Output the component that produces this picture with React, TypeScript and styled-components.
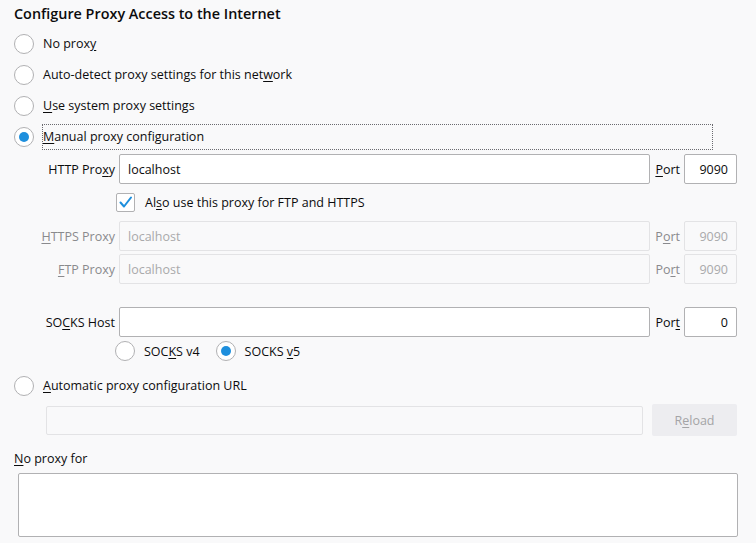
import React from "react";
import styled, { createGlobalStyle } from "styled-components";

const GlobalStyle = createGlobalStyle`
  html, body {
    margin: 0;
    padding: 0;
    background-color: #f9f9fa;
  }

  body {
    font-family: "Open Sans", "Noto Sans", sans-serif;
    font-size: 12.5px;
    color: #0c0c0d;
  }

  * {
    box-sizing: border-box;
  }
`;

const Page = styled.div`
  width: 756px;
  height: 543px;
  padding: 0 19px 0 14px;
  overflow: hidden;
`;

const Title = styled.h1`
  margin: 0;
  height: 28px;
  line-height: 28px;
  font-size: 14.4px;
  font-weight: 600;
`;

const RadioRow = styled.div<{ spaced?: boolean }>`
  display: flex;
  align-items: center;
  height: 31px;
  gap: 8px;
  margin-top: ${({ spaced }) => (spaced ? "8px" : "0")};
`;

const RadioCircle = styled.span<{ checked?: boolean }>`
  position: relative;
  flex: none;
  width: 20px;
  height: 20px;
  border-radius: 50%;
  border: 1px solid #b1b1b3;
  background-color: #fff;

  &::after {
    content: "";
    display: ${({ checked }) => (checked ? "block" : "none")};
    position: absolute;
    top: 4px;
    left: 4px;
    width: 10px;
    height: 10px;
    border-radius: 50%;
    background-color: #1e8fdd;
  }
`;

const RowLabel = styled.span<{ focused?: boolean }>`
  flex: 1;
  height: 26px;
  line-height: 24px;
  margin-right: 24px;
  border: 1px dotted ${({ focused }) => (focused ? "#6a6a6f" : "transparent")};
  white-space: nowrap;
`;

const Key = styled.u`
  text-decoration: underline;
  text-underline-offset: 2px;
`;

const ProxyGrid = styled.div`
  display: grid;
  grid-template-columns: 101px 1fr auto 53px;
  column-gap: 4px;
  row-gap: 3px;
  margin-top: 2px;
`;

const FieldLabel = styled.label<{ disabled?: boolean }>`
  align-self: center;
  text-align: right;
  white-space: nowrap;
  color: ${({ disabled }) => (disabled ? "#8a8a8d" : "#0c0c0d")};
`;

const PortLabel = styled(FieldLabel)`
  padding-left: 1px;
`;

const TextInput = styled.input<{ $right?: boolean; $height?: number }>`
  width: 100%;
  height: ${({ $height }) => $height ?? 30}px;
  margin: 0;
  padding: 0 8px;
  font: inherit;
  color: #0c0c0d;
  text-align: ${({ $right }) => ($right ? "right" : "left")};
  background-color: #fff;
  border: 1px solid #b1b1b3;
  border-radius: 2px;
  outline: none;

  &:disabled {
    color: #a9a9ab;
    background-color: #f9f9fa;
    border-color: #e3e3e5;
  }
`;

const CheckRow = styled.div`
  grid-column: 2 / -1;
  display: flex;
  align-items: center;
  gap: 10px;
  height: 31px;
  margin-left: -3px;
`;

const CheckBox = styled.span`
  flex: none;
  width: 19px;
  height: 19px;
  border: 1px solid #b1b1b3;
  border-radius: 2px;
  background-color: #fff;
  display: flex;
  align-items: center;
  justify-content: center;
`;

const Spacer = styled.div`
  grid-column: 1 / -1;
  height: 17px;
`;

const SocksRow = styled.div`
  grid-column: 2 / -1;
  display: flex;
  align-items: center;
  height: 22px;
  margin-left: -4px;
`;

const SocksOption = styled.span`
  display: flex;
  align-items: center;
  gap: 9px;
  margin-right: 16px;
`;

const UrlRow = styled.div`
  display: flex;
  align-items: center;
  gap: 9px;
  height: 32px;
  margin-top: 3px;
  padding-left: 32px;
`;

const ReloadButton = styled.button`
  flex: none;
  width: 85px;
  height: 32px;
  font: inherit;
  color: #a4a4a6;
  background-color: #ededf0;
  border: none;
  border-radius: 2px;
`;

const NoProxyLabel = styled.div`
  margin-top: 13px;
  line-height: 20px;
`;

const NoProxyArea = styled.textarea`
  display: block;
  width: 720px;
  height: 64px;
  margin: 4px 0 0 4px;
  font: inherit;
  background-color: #fff;
  border: 1px solid #b1b1b3;
  border-radius: 2px;
  resize: none;
  outline: none;
`;

const CheckMark = () => (
  <svg width="17" height="17" viewBox="0 0 17 17">
    <path
      d="M3.5 8.5 L7 12.5 L14 3.5"
      fill="none"
      stroke="#1e8fdd"
      strokeWidth="2"
      strokeLinecap="round"
      strokeLinejoin="round"
    />
  </svg>
);

const Radio = ({
  checked,
  focused,
  spaced,
  children,
}: {
  checked?: boolean;
  focused?: boolean;
  spaced?: boolean;
  children: React.ReactNode;
}) => (
  <RadioRow spaced={spaced}>
    <RadioCircle checked={checked} />
    <RowLabel focused={focused}>{children}</RowLabel>
  </RadioRow>
);

const ProxyRow = ({
  label,
  port,
  value,
  portValue,
  disabled,
}: {
  label: React.ReactNode;
  port: React.ReactNode;
  value: string;
  portValue: string;
  disabled?: boolean;
}) => (
  <>
    <FieldLabel disabled={disabled}>{label}</FieldLabel>
    <TextInput defaultValue={value} disabled={disabled} />
    <PortLabel disabled={disabled}>{port}</PortLabel>
    <TextInput defaultValue={portValue} disabled={disabled} $right />
  </>
);

export default function App() {
  return (
    <Page>
      <GlobalStyle />
      <Title>Configure Proxy Access to the Internet</Title>

      <Radio>
        No prox<Key>y</Key>
      </Radio>
      <Radio>
        Auto-detect proxy settings for this net<Key>w</Key>ork
      </Radio>
      <Radio>
        <Key>U</Key>se system proxy settings
      </Radio>
      <Radio checked focused>
        <Key>M</Key>anual proxy configuration
      </Radio>

      <ProxyGrid>
        <ProxyRow
          label={
            <>
              HTTP Pro<Key>x</Key>y
            </>
          }
          port={
            <>
              <Key>P</Key>ort
            </>
          }
          value="localhost"
          portValue="9090"
        />
        <CheckRow>
          <CheckBox>
            <CheckMark />
          </CheckBox>
          <span>
            Al<Key>s</Key>o use this proxy for FTP and HTTPS
          </span>
        </CheckRow>
        <ProxyRow
          disabled
          label={
            <>
              <Key>H</Key>TTPS Proxy
            </>
          }
          port={
            <>
              P<Key>o</Key>rt
            </>
          }
          value="localhost"
          portValue="9090"
        />
        <ProxyRow
          disabled
          label={
            <>
              <Key>F</Key>TP Proxy
            </>
          }
          port={
            <>
              Po<Key>r</Key>t
            </>
          }
          value="localhost"
          portValue="9090"
        />
        <Spacer />
        <ProxyRow
          label={
            <>
              SO<Key>C</Key>KS Host
            </>
          }
          port={
            <>
              Por<Key>t</Key>
            </>
          }
          value=""
          portValue="0"
        />
        <SocksRow>
          <SocksOption>
            <RadioCircle />
            <span>
              SOC<Key>K</Key>S v4
            </span>
          </SocksOption>
          <SocksOption>
            <RadioCircle checked />
            <span>
              SOCKS <Key>v</Key>5
            </span>
          </SocksOption>
        </SocksRow>
      </ProxyGrid>

      <Radio spaced>
        <Key>A</Key>utomatic proxy configuration URL
      </Radio>
      <UrlRow>
        <TextInput disabled defaultValue="" $height={29} />
        <ReloadButton disabled>
          R<Key>e</Key>load
        </ReloadButton>
      </UrlRow>

      <NoProxyLabel>
        <Key>N</Key>o proxy for
      </NoProxyLabel>
      <NoProxyArea />
    </Page>
  );
}
